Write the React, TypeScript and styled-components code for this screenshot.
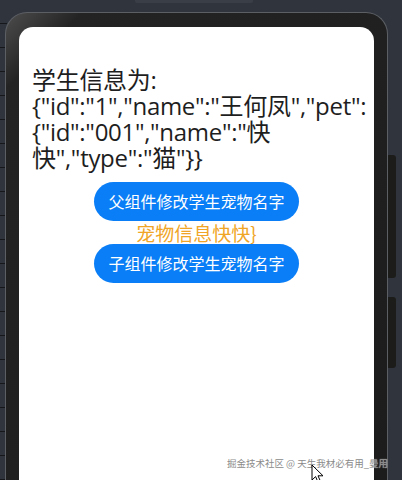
import styled, { createGlobalStyle } from "styled-components";

const GlobalStyle = createGlobalStyle`
  html, body {
    margin: 0;
    padding: 0;
    background: #30343d;
    overflow: hidden;
  }
  * {
    box-sizing: border-box;
  }
`;

const Stage = styled.div`
  position: relative;
  width: 402px;
  height: 480px;
  overflow: hidden;
  display: flex;
  flex-direction: column;
  background:
    repeating-linear-gradient(
        to bottom,
        transparent 0 23px,
        #15171b 23px 24px
      )
      0 0 / 7px 100% no-repeat,
    #30343d;
`;

const TopNub = styled.div`
  width: 118px;
  height: 3px;
  margin-left: 135px;
  background: #3a3e47;
  border-radius: 0 0 2px 2px;
`;

const Phone = styled.div`
  position: relative;
  margin: 9px 0 0 5px;
  width: 383px;
  height: 500px;
  padding: 14px 13px 0 13px;
  border: 1px solid #5c5f64;
  border-bottom: none;
  border-radius: 22px 22px 0 0;
  background: linear-gradient(135deg, #4d4d4d 0%, #232323 9%, #1c1c1c 100%);
`;

const SideKey = styled.div<{ $top: number; $height: number }>`
  position: absolute;
  right: -9px;
  top: ${({ $top }) => $top}px;
  width: 8px;
  height: ${({ $height }) => $height}px;
  background: #1c1c1a;
  border-radius: 0 3px 3px 0;
`;

const Screen = styled.div`
  height: 100%;
  background: #ffffff;
  border-radius: 14px 14px 0 0;
  padding: 40px 13px 0 13px;
  display: flex;
  flex-direction: column;
  align-items: center;
  font-family: "Noto Sans CJK SC", "Noto Sans", sans-serif;
`;

const Info = styled.p`
  align-self: stretch;
  margin: 0 0 11px 0;
  font-family: "Open Sans", "Noto Sans CJK SC", sans-serif;
  font-size: 24px;
  line-height: 26px;
  letter-spacing: -0.3px;
  white-space: nowrap;
  color: #1e1e1e;
`;

const PillButton = styled.button`
  width: 205px;
  height: 39px;
  border: none;
  border-radius: 20px;
  background: #0a7ef6;
  color: #ffffff;
  font-family: "Noto Sans CJK SC", sans-serif;
  font-size: 16px;
  padding: 0;
  cursor: pointer;
`;

const PetName = styled.div`
  margin: 0;
  font-size: 19px;
  line-height: 23px;
  color: #f0a526;
`;

const Watermark = styled.div`
  position: absolute;
  right: 14px;
  bottom: 10px;
  font-family: "Noto Sans CJK SC", sans-serif;
  font-size: 9.5px;
  color: #8a8a8a;
  text-shadow: 0 0 1px rgba(255, 255, 255, 0.8);
  white-space: nowrap;
`;

const Cursor = styled.svg`
  position: absolute;
  left: 311px;
  top: 464px;
`;

export default function App() {
  return (
    <>
      <GlobalStyle />
      <Stage>
        <TopNub />
        <Phone>
          <SideKey $top={142} $height={123} />
          <SideKey $top={284} $height={71} />
          <Screen>
            <Info>
              学生信息为:
              <br />
              {'{"id":"1","name":"王何凤","pet":'}
              <br />
              {'{"id":"001","name":"快'}
              <br />
              {'快","type":"猫"}}'}
            </Info>
            <PillButton>父组件修改学生宠物名字</PillButton>
            <PetName>宠物信息快快{"}"}</PetName>
            <PillButton>子组件修改学生宠物名字</PillButton>
          </Screen>
        </Phone>
        <Watermark>掘金技术社区 @ 天生我材必有用_曼用</Watermark>
        <Cursor width="14" height="20" viewBox="0 0 14 20">
          <path
            d="M1 1 L1 16 L4.6 12.6 L7.2 18.6 L9.6 17.6 L7 11.8 L12 11.8 Z"
            fill="#ffffff"
            stroke="#000000"
            strokeWidth="1"
            strokeLinejoin="round"
          />
        </Cursor>
      </Stage>
    </>
  );
}
